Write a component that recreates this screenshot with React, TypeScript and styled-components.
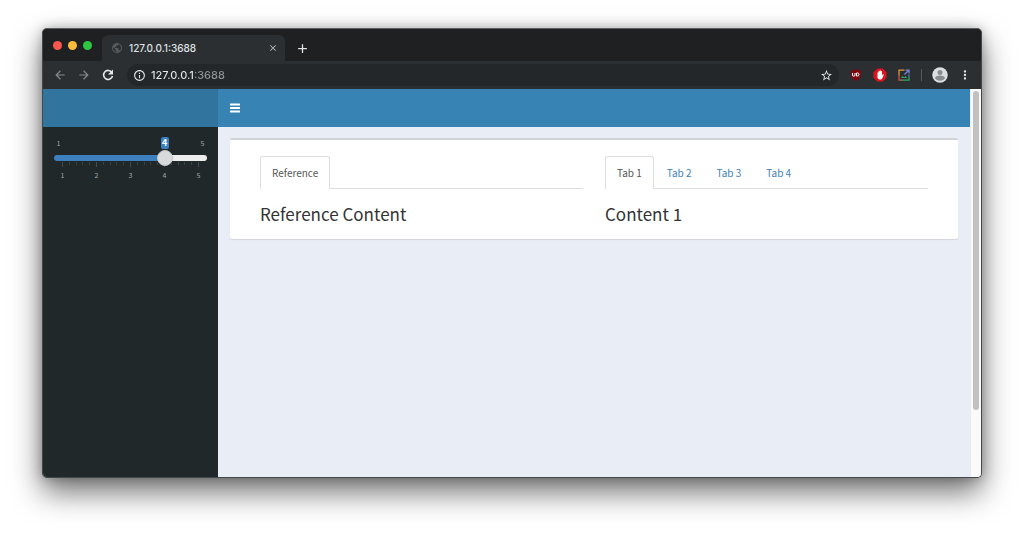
import React, { useState } from "react";
import styled, { createGlobalStyle } from "styled-components";
import {
  MdAdd,
  MdArrowBack,
  MdArrowForward,
  MdClose,
  MdInfoOutline,
  MdMoreVert,
  MdPublic,
  MdStarBorder,
} from "react-icons/md";

const GlobalStyle = createGlobalStyle`
  *, *::before, *::after { box-sizing: border-box; }
  body { margin: 0; background: #fff; }
  button { border: 0; padding: 0; background: none; font: inherit; color: inherit; cursor: pointer; }
`;

const sourceSans = `"Noto Sans CJK JP", "Noto Sans", sans-serif`;
const chromeSans = `Inter, Roboto, sans-serif`;

const Desktop = styled.div`
  display: flex;
  min-height: 100vh;
  padding: 28px 42px 56px;
  overflow: hidden;
`;

const BrowserWindow = styled.div`
  flex: 1;
  min-width: 0;
  display: flex;
  flex-direction: column;
  overflow: hidden;
  border: 1px solid #45484a;
  border-top-color: #5a5c5d;
  border-radius: 5px;
  background: #1f2122;
  box-shadow: 0 14px 30px rgba(0, 0, 0, 0.56), 0 0 12px rgba(0, 0, 0, 0.25);
`;

const TabStrip = styled.div`
  display: flex;
  align-items: flex-end;
  height: 32px;
  padding-left: 10px;
  background: #1e2021;
  color: #dfe1e2;
  font: 500 10px/14px ${chromeSans};
`;

const TrafficLights = styled.div`
  display: flex;
  gap: 6px;
  width: 49px;
  padding-bottom: 11px;
`;

const Light = styled.button<{ $color: string }>`
  width: 9px;
  height: 9px;
  border-radius: 50%;
  background: ${(p) => p.$color};
`;

const BrowserTab = styled.div`
  display: flex;
  align-items: center;
  gap: 6px;
  width: 183px;
  height: 26px;
  padding: 0 7px 0 9px;
  border-radius: 6px 6px 0 0;
  background: #2b2f31;
`;

const BrowserTabTitle = styled.span`
  flex: 1;
`;

const IconButton = styled.button<{ $size?: number; $dim?: boolean }>`
  display: flex;
  align-items: center;
  justify-content: center;
  flex: none;
  width: ${(p) => p.$size ?? 14}px;
  height: ${(p) => p.$size ?? 14}px;
  color: ${(p) => (p.$dim ? "#85898b" : "#e4e6e7")};
`;

const NewTabSlot = styled.div`
  display: flex;
  align-items: center;
  height: 26px;
  padding-left: 9px;
`;

const Toolbar = styled.div`
  display: flex;
  align-items: center;
  gap: 10px;
  height: 28px;
  padding: 0 9px 0 10px;
  background: #2b2f31;
`;

const AddressBar = styled.div`
  flex: 1;
  display: flex;
  align-items: center;
  gap: 5px;
  height: 22px;
  margin-left: 2px;
  padding: 0 6px 0 5px;
  border-radius: 11px;
  background: #232729;
  color: #d5d8d9;
`;

const AddressInput = styled.input`
  flex: 1;
  min-width: 0;
  height: 16px;
  padding: 0;
  border: 0;
  outline: 0;
  background: linear-gradient(90deg, #e4e6e7 44px, #909496 44px);
  -webkit-background-clip: text;
  background-clip: text;
  color: #e4e6e7;
  -webkit-text-fill-color: transparent;
  font: 500 11px/16px ${chromeSans};
`;

const Divider = styled.span`
  width: 1px;
  height: 12px;
  background: #55595b;
`;

const Page = styled.div`
  flex: 1;
  display: flex;
  min-height: 0;
  background: #e9edf5;
  font-family: ${sourceSans};
`;

const Sidebar = styled.aside`
  flex: none;
  width: 175px;
  background: #20282a;
`;

const Brand = styled.div`
  height: 38px;
  background: #31749d;
`;

const Main = styled.main`
  flex: 1;
  min-width: 0;
`;

const Navbar = styled.header`
  display: flex;
  align-items: center;
  height: 38px;
  padding-left: 12px;
  background: #3783b3;
`;

const MenuButton = styled.button`
  display: flex;
  color: #fff;
`;

const ScrollTrack = styled.div`
  flex: none;
  width: 11px;
  padding: 2px;
  background: #fafafa;
  border-left: 1px solid #ececec;
`;

const ScrollThumb = styled.div`
  height: 83%;
  border-radius: 3px;
  background: #c1c1c1;
`;

const SliderPanel = styled.div`
  padding: 10px 11px 0;
  color: #a4a9ab;
  font-size: 7px;
  line-height: 12px;
`;

const SliderBounds = styled.div`
  position: relative;
  display: flex;
  justify-content: space-between;
  padding: 0 2px;
`;

const Bound = styled.span`
  width: 5px;
  text-align: center;
`;

const SliderTravel = styled.div`
  position: absolute;
  inset: 0 8px;
`;

const SliderValue = styled.output`
  position: absolute;
  width: 8px;
  margin-left: -4px;
  border-radius: 2px;
  background: #3d80c0;
  color: #fff;
  font-size: 9px;
  font-weight: 700;
  text-align: center;
`;

const Range = styled.input`
  position: relative;
  z-index: 1;
  display: block;
  width: 100%;
  height: 16px;
  margin: 1px 0 0;
  appearance: none;
  background: none;

  &::-webkit-slider-runnable-track {
    height: 6px;
    border-radius: 3px;
    background: linear-gradient(90deg, #3d80c0 72%, #ededed 72%);
  }
  &::-webkit-slider-thumb {
    appearance: none;
    width: 16px;
    height: 16px;
    margin-top: -5px;
    border: 1px solid #c4c7c8;
    border-radius: 50%;
    background: #d9dadb;
  }
`;

const Ticks = styled.div`
  display: flex;
  justify-content: space-between;
  height: 5px;
  margin: -4px 8px 0;
`;

const Tick = styled.span<{ $major: boolean }>`
  width: 1px;
  height: ${(p) => (p.$major ? 5 : 3)}px;
  background: ${(p) => (p.$major ? "#3d4e57" : "#394144")};
`;

const TickLabels = styled.div`
  display: flex;
  justify-content: space-between;
  margin: 2px 4px 0;
`;

const TickLabel = styled.span`
  width: 9px;
  text-align: center;
`;

const Box = styled.section`
  display: grid;
  grid-template-columns: 1fr 1fr;
  gap: 22px;
  margin: 11px 12px;
  padding: 16px 30px 13px;
  border-top: 2px solid #cfd2d6;
  border-radius: 2px;
  background: #fff;
  box-shadow: 0 1px 1px rgba(0, 0, 0, 0.1);
`;

const TabList = styled.div`
  display: flex;
  gap: 1px;
  border-bottom: 1px solid #ddd;
`;

const Tab = styled.button<{ $active: boolean }>`
  height: 33px;
  margin-bottom: -1px;
  padding: 0 11px;
  border: 1px solid ${(p) => (p.$active ? "#ddd" : "transparent")};
  border-bottom: 0;
  border-radius: 3px 3px 0 0;
  background: ${(p) => (p.$active ? "#fff" : "transparent")};
  color: ${(p) => (p.$active ? "#555" : "#3f82b7")};
  font: 400 10px/16px ${sourceSans};
`;

const Heading = styled.h3`
  margin: 13px 0 0;
  color: #333;
  font-size: 17px;
  font-weight: 400;
  line-height: 24px;
`;

function ReloadIcon() {
  return (
    <svg width="14" height="14" viewBox="0 0 28 28">
      <path d="M21.500 8.500A9 9 0 1 0 23 16" fill="none" stroke="currentColor" strokeWidth="3.200" />
      <path d="M24 3v10H14z" fill="currentColor" />
    </svg>
  );
}

function BarsIcon() {
  return (
    <svg width="10" height="10" viewBox="0 0 20 20" fill="currentColor">
      <rect y="1" width="20" height="4" rx="1" />
      <rect y="8" width="20" height="4" rx="1" />
      <rect y="15" width="20" height="4" rx="1" />
    </svg>
  );
}

function ShieldIcon() {
  return (
    <svg width="12" height="12" viewBox="0 0 24 24">
      <path d="M12 0c4 3 7 3 10 3v8c0 6-4 10-10 13C6 21 2 17 2 11V3c3 0 6 0 10-3z" fill="#800610" />
      <path d="M5 8v4a2.500 2.500 0 0 0 5 0V8M13 8v6h2a3 3 0 0 0 0-6z" fill="none" stroke="#fff" strokeWidth="2" />
    </svg>
  );
}

function BlockerIcon() {
  return (
    <svg width="14" height="14" viewBox="0 0 28 28">
      <path d="M8.500 1h11L27 8.500v11L19.500 27h-11L1 19.500v-11z" fill="#dc1420" />
      <path
        d="M9 9.500c0-1.500 2-1.500 2 0V7c0-1.700 2.300-1.700 2.300 0V5.800c0-1.700 2.400-1.700 2.400 0V7c0-1.600 2.300-1.600 2.300 0v8l1.400-2c1-1.300 2.600-.4 2 1l-2.600 6c-.8 2-2 3-4.800 3-3.500 0-5-2-5-5z"
        fill="#fff"
      />
    </svg>
  );
}

function CaptureIcon() {
  return (
    <svg width="12" height="12" viewBox="0 0 24 24" fill="none" strokeWidth="2.500">
      <path d="M2 13V2h11" stroke="#e39a3b" />
      <path d="M2 12v10h6" stroke="#d9534c" />
      <path d="M7 22h15v-6" stroke="#36a568" />
      <path d="M22 16v-5" stroke="#4a7fd4" />
      <path d="M13 11l8-8M15 2h7v7" stroke="#7583d8" />
      <path d="M6 18l3-4 3 3 3-3 3 4z" fill="#36a568" />
    </svg>
  );
}

function AvatarIcon() {
  return (
    <svg width="16" height="16" viewBox="0 0 32 32">
      <circle cx="16" cy="16" r="15.500" fill="#dcdedf" />
      <circle cx="16" cy="11" r="5" fill="#888c8e" />
      <path d="M6 22c0-7 20-7 20 0-4 7-16 7-20 0z" fill="#888c8e" />
    </svg>
  );
}

function TabSlider() {
  const [value, setValue] = useState(4);
  const ratio = (value - 1) / 4;
  return (
    <SliderPanel>
      <SliderBounds>
        <Bound>1</Bound>
        <Bound>5</Bound>
        <SliderTravel>
          <SliderValue htmlFor="tab-slider" style={{ left: `${ratio * 100}%` }}>
            {value}
          </SliderValue>
        </SliderTravel>
      </SliderBounds>
      <Range
        id="tab-slider"
        type="range"
        min={1}
        max={5}
        value={value}
        aria-label="Tab number"
        onChange={(e) => setValue(Number(e.target.value))}
      />
      <Ticks>
        {Array.from({ length: 21 }, (_, i) => (
          <Tick key={i} $major={i % 5 === 0} />
        ))}
      </Ticks>
      <TickLabels>
        {[1, 2, 3, 4, 5].map((n) => (
          <TickLabel key={n}>{n}</TickLabel>
        ))}
      </TickLabels>
    </SliderPanel>
  );
}

function TabPanel({ tabs }: { tabs: { label: string; content: string }[] }) {
  const [active, setActive] = useState(0);
  return (
    <div>
      <TabList role="tablist">
        {tabs.map((tab, i) => (
          <Tab
            key={tab.label}
            role="tab"
            aria-selected={i === active}
            $active={i === active}
            onClick={() => setActive(i)}
          >
            {tab.label}
          </Tab>
        ))}
      </TabList>
      <Heading>{tabs[active].content}</Heading>
    </div>
  );
}

const referenceTabs = [{ label: "Reference", content: "Reference Content" }];
const contentTabs = [1, 2, 3, 4].map((n) => ({ label: `Tab ${n}`, content: `Content ${n}` }));

export default function App() {
  return (
    <>
      <GlobalStyle />
      <Desktop>
        <BrowserWindow>
          <TabStrip>
            <TrafficLights>
              <Light $color="#fc5650" aria-label="Close window" />
              <Light $color="#fdb93c" aria-label="Minimize window" />
              <Light $color="#2ec744" aria-label="Zoom window" />
            </TrafficLights>
            <BrowserTab>
              <MdPublic size={12} color="#55595b" />
              <BrowserTabTitle>127.0.0.1:3688</BrowserTabTitle>
              <IconButton $size={10} aria-label="Close tab">
                <MdClose size={10} color="#b9bcbd" />
              </IconButton>
            </BrowserTab>
            <NewTabSlot>
              <IconButton $size={16} aria-label="New tab">
                <MdAdd size={15} />
              </IconButton>
            </NewTabSlot>
          </TabStrip>
          <Toolbar>
            <IconButton $dim aria-label="Back">
              <MdArrowBack size={14} />
            </IconButton>
            <IconButton $dim aria-label="Forward">
              <MdArrowForward size={14} />
            </IconButton>
            <IconButton aria-label="Reload">
              <ReloadIcon />
            </IconButton>
            <AddressBar>
              <IconButton aria-label="Site information">
                <MdInfoOutline size={13} />
              </IconButton>
              <AddressInput aria-label="Address" defaultValue="127.0.0.1:3688" />
              <IconButton aria-label="Bookmark">
                <MdStarBorder size={13} />
              </IconButton>
            </AddressBar>
            <IconButton aria-label="Shield extension">
              <ShieldIcon />
            </IconButton>
            <IconButton aria-label="Ad blocker extension">
              <BlockerIcon />
            </IconButton>
            <IconButton aria-label="Capture extension">
              <CaptureIcon />
            </IconButton>
            <Divider />
            <IconButton $size={16} aria-label="Profile">
              <AvatarIcon />
            </IconButton>
            <IconButton aria-label="Browser menu">
              <MdMoreVert size={14} />
            </IconButton>
          </Toolbar>
          <Page>
            <Sidebar>
              <Brand />
              <TabSlider />
            </Sidebar>
            <Main>
              <Navbar>
                <MenuButton aria-label="Toggle navigation">
                  <BarsIcon />
                </MenuButton>
              </Navbar>
              <Box>
                <TabPanel tabs={referenceTabs} />
                <TabPanel tabs={contentTabs} />
              </Box>
            </Main>
            <ScrollTrack>
              <ScrollThumb />
            </ScrollTrack>
          </Page>
        </BrowserWindow>
      </Desktop>
    </>
  );
}
